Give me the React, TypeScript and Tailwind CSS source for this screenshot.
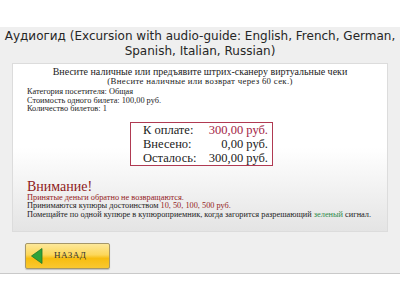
import React from "react";

const serif = { fontFamily: '"Liberation Serif", "Times New Roman", serif' };

export default function App() {
  return (
    <div className="w-[400px] h-[300px] bg-white overflow-hidden">
      <div className="h-[27px]" />
      <div className="h-[247px] bg-[#efefef] border-b border-[#c9c9c9] flex flex-col">
        <div
          className="pt-[2px] text-center text-[12px] leading-[15px] text-[#262626] whitespace-nowrap"
          style={{ fontFamily: '"DejaVu Sans", Verdana, sans-serif' }}
        >
          <div>Аудиогид (Excursion with audio-guide: English, French, German,</div>
          <div>Spanish, Italian, Russian)</div>
        </div>
        <div
          className="mt-[4px] mx-[12px] h-[169px] border border-[#dcdcdc] bg-[linear-gradient(to_bottom,#ffffff_0%,#ffffff_50%,#e4e4e4_100%)] pt-[2px] px-[14px] text-[#222]"
          style={serif}
        >
          <div className="text-center text-[10px] leading-[11px] whitespace-nowrap">
            Внесите наличные или предъявите штрих-сканеру виртуальные чеки
          </div>
          <div className="text-center text-[8.8px] leading-[9px] tracking-[0.3px] whitespace-nowrap">
            (Внесите наличные или возврат через 60 сек.)
          </div>
          <div className="mt-[2px] text-[8.3px] leading-[8.5px]">
            <div>Категория посетителя: Общая</div>
            <div>Стоимость одного билета: 100,00 руб.</div>
            <div>Количество билетов: 1</div>
          </div>
          <div className="mt-[8px] flex justify-center">
            <div className="ml-[3px] w-[143px] border-[1.5px] border-[#b03a52] bg-white pl-[12px] pr-[4px] text-[12.5px] leading-[14px] grid grid-cols-[auto_1fr] whitespace-nowrap">
              <div>К оплате:</div>
              <div className="text-right text-[#a31d45]">300,00 руб.</div>
              <div>Внесено:</div>
              <div className="text-right">0,00 руб.</div>
              <div>Осталось:</div>
              <div className="text-right">300,00 руб.</div>
            </div>
          </div>
          <div className="mt-[14px] text-[14px] leading-[14px] text-[#8e1b1b]">Внимание!</div>
          <div className="text-[8.3px] leading-[8.5px] whitespace-nowrap">
            <div className="text-[#941c1c]">Принятые деньги обратно не возвращаются.</div>
            <div>
              Принимаются купюры достоинством{" "}
              <span className="text-[#941c1c]">10, 50, 100, 500 руб.</span>
            </div>
            <div>
              Помещайте по одной купюре в купюроприемник, когда загорится разрешающий{" "}
              <span className="text-[#2f8a4c]">зеленый</span> сигнал.
            </div>
          </div>
        </div>
        <div className="mt-[11px] ml-[25px]">
          <div className="w-[85px] h-[26px] rounded-[2px] border border-[#a5976a] bg-[linear-gradient(to_bottom,#fde89a_0%,#fcd75a_45%,#f7bd10_60%,#f9c830_100%)] flex items-center shadow-[0_1px_1px_rgba(0,0,0,0.2)]">
            <svg width="12" height="16" viewBox="0 0 12 16" className="ml-[5px]">
              <polygon points="11,0.5 11,15.5 0.5,8" fill="#2fa23a" stroke="#1f7a28" strokeWidth="0.8" />
            </svg>
            <span className="ml-[11px] text-[9px] tracking-[0.5px] text-[#333]" style={serif}>
              НАЗАД
            </span>
          </div>
        </div>
      </div>
    </div>
  );
}
